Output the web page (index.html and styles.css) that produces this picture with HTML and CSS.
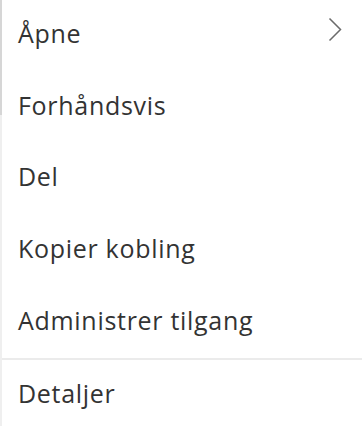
FILE: index.html
```html
<!DOCTYPE html>
<html lang="no">
<head>
<meta charset="utf-8">
<link rel="stylesheet" href="styles.css">
</head>
<body>
<div class="page">
  <div class="edge">
    <div class="edge-dark"></div>
    <div class="edge-light"></div>
  </div>
  <ul class="menu">
    <li class="item">
      <span class="label">Åpne</span>
      <svg class="chevron" width="14" height="25" viewBox="0 0 14 25" aria-hidden="true">
        <path d="M1.5 1.5 L12.5 12.5 L1.5 23.5" fill="none" stroke="#6b6b6b" stroke-width="1.5"/>
      </svg>
    </li>
    <li class="item"><span class="label">Forhåndsvis</span></li>
    <li class="item"><span class="label">Del</span></li>
    <li class="item"><span class="label">Kopier kobling</span></li>
    <li class="item"><span class="label">Administrer tilgang</span></li>
    <li class="divider"></li>
    <li class="item"><span class="label">Detaljer</span></li>
  </ul>
</div>
</body>
</html>
```
FILE: styles.css
```css
html, body {
  margin: 0;
  padding: 0;
  background: #ffffff;
}
.page {
  display: flex;
  width: 362px;
  height: 426px;
  overflow: hidden;
}
.edge {
  width: 2px;
  flex: none;
  display: flex;
  flex-direction: column;
}
.edge-dark {
  height: 115px;
  background: #d6d6d6;
}
.edge-light {
  flex: 1;
  background: #efefef;
}
.menu {
  list-style: none;
  margin: 0;
  padding: 0;
  flex: 1;
  font-family: "Open Sans", "Noto Sans", sans-serif;
  font-size: 25px;
  letter-spacing: 0.7px;
  color: #333333;
}
.item {
  height: 71.6px;
  display: flex;
  align-items: center;
  justify-content: space-between;
  padding: 0 20px 0 16px;
  box-sizing: border-box;
}
.label {
  line-height: 1;
  position: relative;
  top: -2px;
}
.chevron {
  display: block;
  margin-top: -12px;
}
.divider {
  height: 2px;
  background: #ebebeb;
}
```
